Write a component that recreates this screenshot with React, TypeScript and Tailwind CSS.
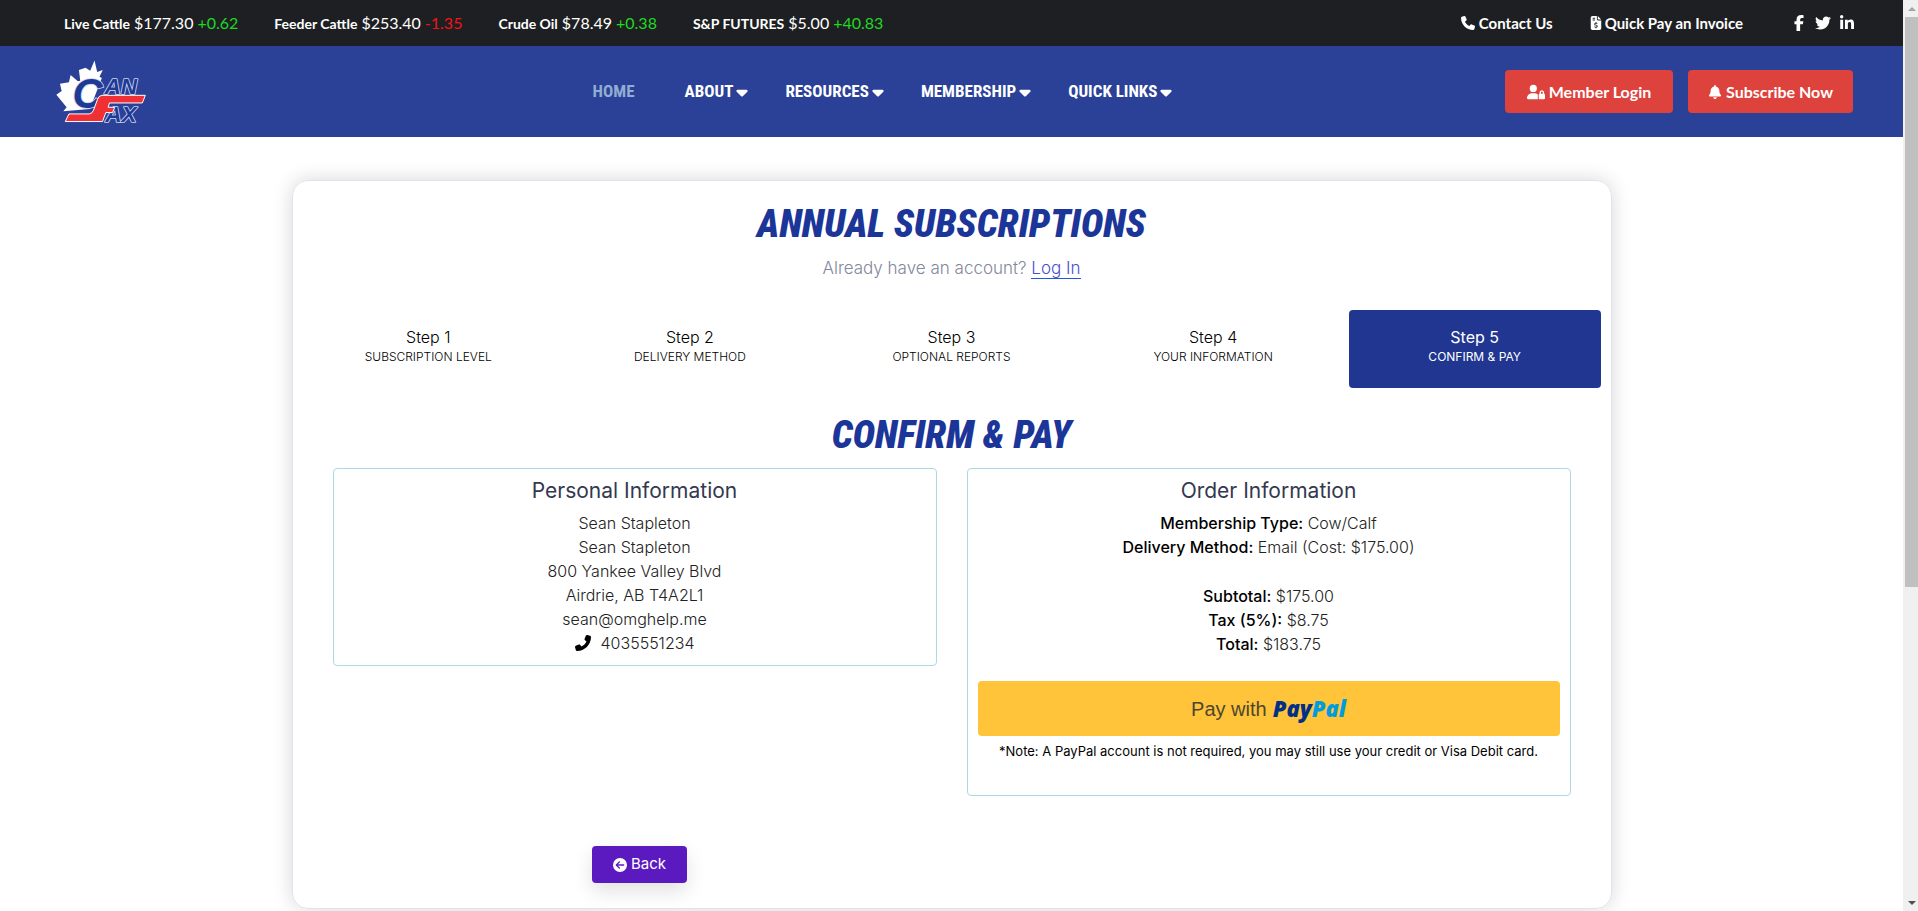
import type { ReactNode } from "react";
import {
  FaBell,
  FaCaretDown,
  FaCircleArrowLeft,
  FaFacebookF,
  FaFileInvoiceDollar,
  FaLinkedinIn,
  FaPhone,
  FaPhoneFlip,
  FaTwitter,
  FaUserLock,
} from "react-icons/fa6";

const quotes = [
  { name: "Live Cattle", price: "$177.30", change: "+0.62", up: true },
  { name: "Feeder Cattle", price: "$253.40", change: "-1.35", up: false },
  { name: "Crude Oil", price: "$78.49", change: "+0.38", up: true },
  { name: "S&P FUTURES", price: "$5.00", change: "+40.83", up: true },
];

const menus = ["ABOUT", "RESOURCES", "MEMBERSHIP", "QUICK LINKS"];

const steps = [
  { title: "Step 1", label: "SUBSCRIPTION LEVEL" },
  { title: "Step 2", label: "DELIVERY METHOD" },
  { title: "Step 3", label: "OPTIONAL REPORTS" },
  { title: "Step 4", label: "YOUR INFORMATION" },
  { title: "Step 5", label: "CONFIRM & PAY", active: true },
];

function Logo() {
  return (
    <svg viewBox="45 33 280 195" className="h-[65px] w-[93px] overflow-visible" role="img" aria-label="CanFax">
      <path
        d="M164 37 L151 68 L137 59 L117 66 L121 98 L114 100 L92 81 L87 103 L60 107 L65 129 L49 140 L80 178 L70 190 L150 183 L186 90 L179 86 L189 66 L172 72 Z"
        fill="#fff"
      />
      <g
        fontFamily="'Liberation Sans', sans-serif"
        fontWeight="700"
        fontStyle="italic"
        fill="#1d3a96"
        stroke="#cdd5ee"
        strokeWidth="5"
        strokeLinejoin="round"
        style={{ paintOrder: "stroke" }}
      >
        <text x="98" y="181" fontSize="126">C</text>
        <text x="194" y="137" fontSize="68">AN</text>
        <text x="196" y="221" fontSize="68">AX</text>
      </g>
      <path
        d="M186 142 H317 L308 165 H209 L205 178 H225 L218 194 H198 L188 221 H76 L87 198 H148 Q157 197 161 187 L173 154 Q177 143 186 142 Z"
        fill="#f03034"
        stroke="#fff"
        strokeWidth="3"
        strokeLinejoin="round"
      />
    </svg>
  );
}

function TopBar() {
  return (
    <div className="flex h-[46px] items-center justify-between bg-[#1e1f22] pr-12 pl-16 font-['Lato',sans-serif] text-white">
      <ul className="flex items-baseline gap-9">
        {quotes.map((q) => (
          <li key={q.name} className="flex items-baseline gap-1 text-base">
            <strong className="text-sm font-bold">{q.name}</strong>
            <span>{q.price}</span>
            <span className={q.up ? "text-[#1fd822]" : "text-[#f01414]"}>{q.change}</span>
          </li>
        ))}
      </ul>
      <div className="flex items-center text-[15px] font-bold">
        <a href="#contact" className="mr-9 flex items-center gap-1">
          <FaPhone className="size-[14px]" />
          Contact Us
        </a>
        <a href="#invoice" className="mr-12 flex items-center gap-[2px]">
          <FaFileInvoiceDollar className="size-[14px]" />
          Quick Pay an Invoice
        </a>
        <div className="flex items-center gap-2 text-base">
          <a href="#facebook" aria-label="Facebook"><FaFacebookF /></a>
          <a href="#twitter" aria-label="Twitter"><FaTwitter /></a>
          <a href="#linkedin" aria-label="LinkedIn"><FaLinkedinIn /></a>
        </div>
      </div>
    </div>
  );
}

function NavBar() {
  return (
    <header className="grid h-[91px] grid-cols-[1fr_auto_1fr] items-center bg-[#2a4197] pr-[50px] pl-[55px] text-white">
      <a href="#top" className="w-fit"><Logo /></a>
      <nav className="flex items-center gap-[34px] pr-[140px] font-['Roboto_Condensed','Roboto',sans-serif] text-[17px] font-bold">
        <a href="#home" className="mr-4 text-[#93acd2]">HOME</a>
        {menus.map((m) => (
          <a key={m} href="#menu" className="flex items-center">
            {m}
            <FaCaretDown className="size-[18px]" />
          </a>
        ))}
      </nav>
      <div className="flex justify-end gap-[15px] font-['Lato',sans-serif] text-base font-bold">
        <button type="button" className="flex h-[43px] w-[168px] items-center justify-center gap-1 rounded bg-[#dd423c]">
          <FaUserLock className="size-[18px]" />
          Member Login
        </button>
        <button type="button" className="flex h-[43px] w-[165px] items-center justify-center gap-1 rounded bg-[#dd423c]">
          <FaBell className="size-[14px]" />
          Subscribe Now
        </button>
      </div>
    </header>
  );
}

function Title({ children }: { children: ReactNode }) {
  return (
    <h2 className="text-center font-['Roboto_Condensed','Roboto',sans-serif] text-[38px] leading-[42px] font-black text-[#1b3599] italic">
      {children}
    </h2>
  );
}

function Panel({ title, children }: { title: string; children: ReactNode }) {
  return (
    <section className="rounded border border-[#add8e6] px-[10px] pt-2 pb-[10px] text-center">
      <h3 className="mb-[6px] text-[21px] leading-7 font-normal text-[#34384f]">{title}</h3>
      {children}
    </section>
  );
}

function Line({ label, value }: { label: string; value: string }) {
  return (
    <p>
      <span className="font-medium text-black">{label}</span> {value}
    </p>
  );
}

function Scrollbar() {
  return (
    <div aria-hidden="true" className="sticky top-0 flex h-screen w-[15px] shrink-0 flex-col items-center justify-between bg-[#f0f0f0] pl-[2px]">
      <span className="flex h-[17px] items-center">
        <svg viewBox="0 0 8 4" className="h-1 w-2"><path d="M0 4 L4 0 L8 4 Z" fill="#a3a3a3" /></svg>
      </span>
      <span className="flex w-full flex-1 flex-col">
        <span className="h-[65%] w-full bg-[#c0c0c0]" />
      </span>
      <span className="flex h-[17px] items-center">
        <svg viewBox="0 0 8 4" className="h-1 w-2"><path d="M0 0 L4 4 L8 0 Z" fill="#505050" /></svg>
      </span>
    </div>
  );
}

export default function App() {
  return (
    <div className="flex min-h-screen bg-white">
      <div className="min-w-0 flex-1">
        <TopBar />
        <NavBar />
        <main className="px-4 pt-[43px] pb-[2px] font-['Inter',sans-serif]">
          <div className="mx-auto max-w-[1320px] rounded-2xl border border-[#dfe3ee] px-[5px] pt-[22px] pb-[25px] shadow-[0_0_20px_rgba(0,0,0,0.16)]">
            <Title>ANNUAL SUBSCRIPTIONS</Title>
            <p className="mt-[11px] text-center text-[17px] leading-6 font-light text-[#82879c]">
              Already have an account?{" "}
              <a href="#login" className="border-b border-[#2356d8] text-[#4a50d0]">Log In</a>
            </p>
            <ol className="mt-[30px] grid grid-cols-5 text-center">
              {steps.map((s) => (
                <li
                  key={s.title}
                  className={
                    s.active
                      ? "mx-[5px] h-[78px] rounded bg-[#203691] pt-[15px] font-normal text-white"
                      : "mx-[5px] h-[78px] rounded pt-[15px] font-light text-black"
                  }
                >
                  <p className="text-base leading-6">{s.title}</p>
                  <p className="text-xs leading-4">{s.label}</p>
                </li>
              ))}
            </ol>
            <div className="mt-[26px] px-[35px]">
              <Title>CONFIRM &amp; PAY</Title>
              <div className="mt-3 grid grid-cols-2 items-start gap-[30px] text-base leading-6 font-light text-[#222]">
                <Panel title="Personal Information">
                  <p>Sean Stapleton</p>
                  <p>Sean Stapleton</p>
                  <p>800 Yankee Valley Blvd</p>
                  <p>Airdrie, AB T4A2L1</p>
                  <p>sean@omghelp.me</p>
                  <p className="flex items-center justify-center gap-[10px]">
                    <FaPhoneFlip className="size-4 text-black" />
                    4035551234
                  </p>
                </Panel>
                <Panel title="Order Information">
                  <Line label="Membership Type:" value="Cow/Calf" />
                  <Line label="Delivery Method:" value="Email (Cost: $175.00)" />
                  <div className="mt-[25px]">
                    <Line label="Subtotal:" value="$175.00" />
                    <Line label="Tax (5%):" value="$8.75" />
                    <Line label="Total:" value="$183.75" />
                  </div>
                  <button
                    type="button"
                    className="mt-[25px] flex h-[55px] w-full items-center justify-center gap-[6px] rounded bg-[#ffc439] font-['Liberation_Sans',sans-serif] text-xl font-normal text-[#4d4630]"
                  >
                    <span>Pay with</span>
                    <span className="font-['Open_Sans',sans-serif] text-[22px] font-extrabold text-[#003087] italic">
                      Pay<span className="text-[#009cde]">Pal</span>
                    </span>
                  </button>
                  <p className="mt-[5px] mb-6 text-[13px] leading-5 font-normal text-black">
                    *Note: A PayPal account is not required, you may still use your credit or Visa Debit card.
                  </p>
                </Panel>
              </div>
            </div>
            <div className="mt-[50px] grid grid-cols-2 px-[30px]">
              <button
                type="button"
                className="flex h-[37px] w-[95px] items-center justify-center gap-1 justify-self-center rounded bg-[#5b1abf] text-[15px] text-white shadow-[0_8px_20px_rgba(0,0,0,0.12)]"
              >
                <FaCircleArrowLeft className="size-[14px]" />
                Back
              </button>
            </div>
          </div>
        </main>
      </div>
      <Scrollbar />
    </div>
  );
}
